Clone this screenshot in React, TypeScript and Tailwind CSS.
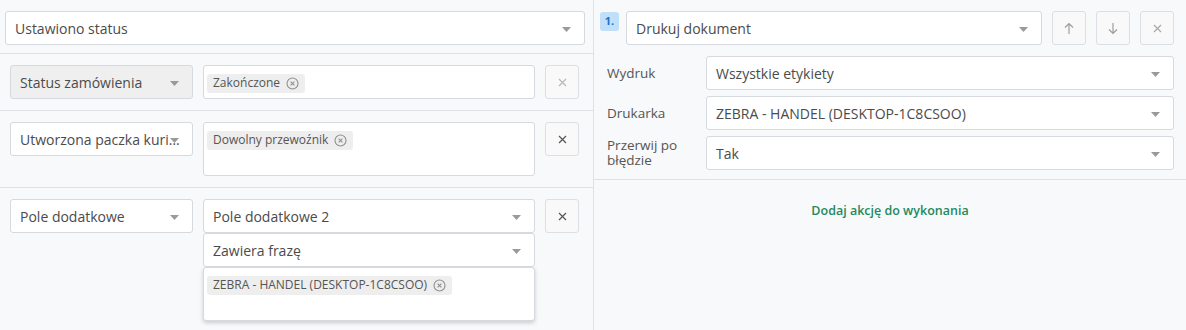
import React from "react";

const font = "font-['Open_Sans',_'Noto_Sans',sans-serif]";

const Caret = () => (
  <svg width="9" height="5" viewBox="0 0 9 5" className="absolute right-[13px] top-[15px]">
    <path d="M0 0 L9 0 L4.5 5 Z" fill="#9a9a9a" />
  </svg>
);

const Select = ({
  label,
  className = "",
  gray = false,
}: {
  label: string;
  className?: string;
  gray?: boolean;
}) => (
  <div
    className={`relative flex items-center h-[34px] pl-[9px] pr-[30px] border border-[#d6d9de] rounded-[3px] ${
      gray ? "bg-[#efefef]" : "bg-white"
    } ${className}`}
  >
    <span className="text-[14px] text-[#4b4b4b] truncate">{label}</span>
    <Caret />
  </div>
);

const CircleX = () => (
  <svg width="13" height="13" viewBox="0 0 13 13" className="shrink-0">
    <circle cx="6.5" cy="6.5" r="5.5" fill="none" stroke="#8f8f8f" strokeWidth="1.1" />
    <path d="M4.6 4.6 L8.4 8.4 M8.4 4.6 L4.6 8.4" stroke="#8f8f8f" strokeWidth="1.1" />
  </svg>
);

const Tag = ({ label }: { label: string }) => (
  <span className="inline-flex items-center gap-[6px] h-[19px] px-[6px] rounded-[3px] bg-[#eeeeee] text-[12px] text-[#555]">
    {label}
    <CircleX />
  </span>
);

const TagInput = ({
  label,
  tall = false,
  shadow = false,
}: {
  label: string;
  tall?: boolean;
  shadow?: boolean;
}) => (
  <div
    className={`w-[332px] ${tall ? "h-[54px]" : "h-[34px]"} bg-white border border-[#d6d9de] rounded-[3px] pt-[3px] pl-[3px] ${
      shadow ? "shadow-[0_2px_4px_rgba(0,0,0,0.18)]" : ""
    }`}
  >
    <Tag label={label} />
  </div>
);

const IconButton = ({ children }: { children: React.ReactNode }) => (
  <div className="w-[34px] h-[34px] shrink-0 flex items-center justify-center border border-[#dcdfe3] rounded-[3px] bg-[#f9f9fa]">
    {children}
  </div>
);

const XIcon = ({ color }: { color: string }) => (
  <svg width="9" height="9" viewBox="0 0 9 9">
    <path d="M1 1 L8 8 M8 1 L1 8" stroke={color} strokeWidth="1.2" />
  </svg>
);

const Arrow = ({ up }: { up: boolean }) => (
  <svg width="10" height="13" viewBox="0 0 10 13">
    {up ? (
      <path d="M5 1.5 V12 M1 5.5 L5 1.5 L9 5.5" stroke="#9d9d9d" strokeWidth="1.2" fill="none" />
    ) : (
      <path d="M5 1 V11.5 M1 7.5 L5 11.5 L9 7.5" stroke="#9d9d9d" strokeWidth="1.2" fill="none" />
    )}
  </svg>
);

const Field = ({ label, value }: { label: React.ReactNode; value: string }) => (
  <div className="flex items-center">
    <span className="w-[99px] shrink-0 text-[13.5px] text-[#555] leading-[15px]">{label}</span>
    <Select label={value} className="flex-1" />
  </div>
);

export default function App() {
  return (
    <div className={`w-[1186px] h-[330px] flex bg-[#f8f9fa] ${font}`}>
      {/* Left: conditions */}
      <div className="w-[594px] shrink-0 border-r border-[#dfe1e5] flex flex-col">
        <div className="pt-[11px] pb-[8px] pl-[5px] pr-[8px] border-b border-[#dfe1e5]">
          <Select label="Ustawiono status" />
        </div>

        <div className="flex gap-[10px] pt-[11px] pb-[11px] pl-[10px] border-b border-[#dfe1e5]">
          <Select label="Status zamówienia" gray className="w-[183px] shrink-0" />
          <TagInput label="Zakończone" />
          <IconButton>
            <XIcon color="#b8b8b8" />
          </IconButton>
        </div>

        <div className="flex gap-[10px] pt-[11px] pb-[11px] pl-[10px] border-b border-[#dfe1e5]">
          <Select label="Utworzona paczka kurierska" className="w-[183px] shrink-0 !pr-[6px]" />
          <TagInput label="Dowolny przewoźnik" tall />
          <IconButton>
            <XIcon color="#555" />
          </IconButton>
        </div>

        <div className="flex gap-[10px] pt-[11px] pl-[10px]">
          <Select label="Pole dodatkowe" className="w-[183px] shrink-0" />
          <div className="flex flex-col w-[332px]">
            <Select label="Pole dodatkowe 2" />
            <Select label="Zawiera frazę" />
            <TagInput label="ZEBRA - HANDEL (DESKTOP-1C8CSOO)" tall shadow />
          </div>
          <IconButton>
            <XIcon color="#555" />
          </IconButton>
        </div>
      </div>

      {/* Right: actions */}
      <div className="flex-1 flex flex-col">
        <div className="pt-[11px] pb-[9px] pl-[6px] pr-[12px] border-b border-[#dfe1e5]">
          <div className="flex items-start">
            <span className="w-[19px] h-[19px] mt-px mr-[7px] rounded-[3px] bg-[#bfe0f8] text-[#1a73c8] text-[11px] font-bold flex items-center justify-center">
              1.
            </span>
            <Select label="Drukuj dokument" className="flex-1" />
            <div className="flex gap-[10px] ml-[10px]">
              <IconButton>
                <Arrow up />
              </IconButton>
              <IconButton>
                <Arrow up={false} />
              </IconButton>
              <IconButton>
                <XIcon color="#a8a8a8" />
              </IconButton>
            </div>
          </div>

          <div className="flex flex-col gap-[6px] mt-[11px] pl-[7px]">
            <Field label="Wydruk" value="Wszystkie etykiety" />
            <Field label="Drukarka" value="ZEBRA - HANDEL (DESKTOP-1C8CSOO)" />
            <Field
              label={
                <>
                  Przerwij po
                  <br />
                  błędzie
                </>
              }
              value="Tak"
            />
          </div>
        </div>

        <div className="flex justify-center pt-[22px]">
          <span className="text-[12.5px] font-semibold text-[#1f8a5f]">Dodaj akcję do wykonania</span>
        </div>
      </div>
    </div>
  );
}
